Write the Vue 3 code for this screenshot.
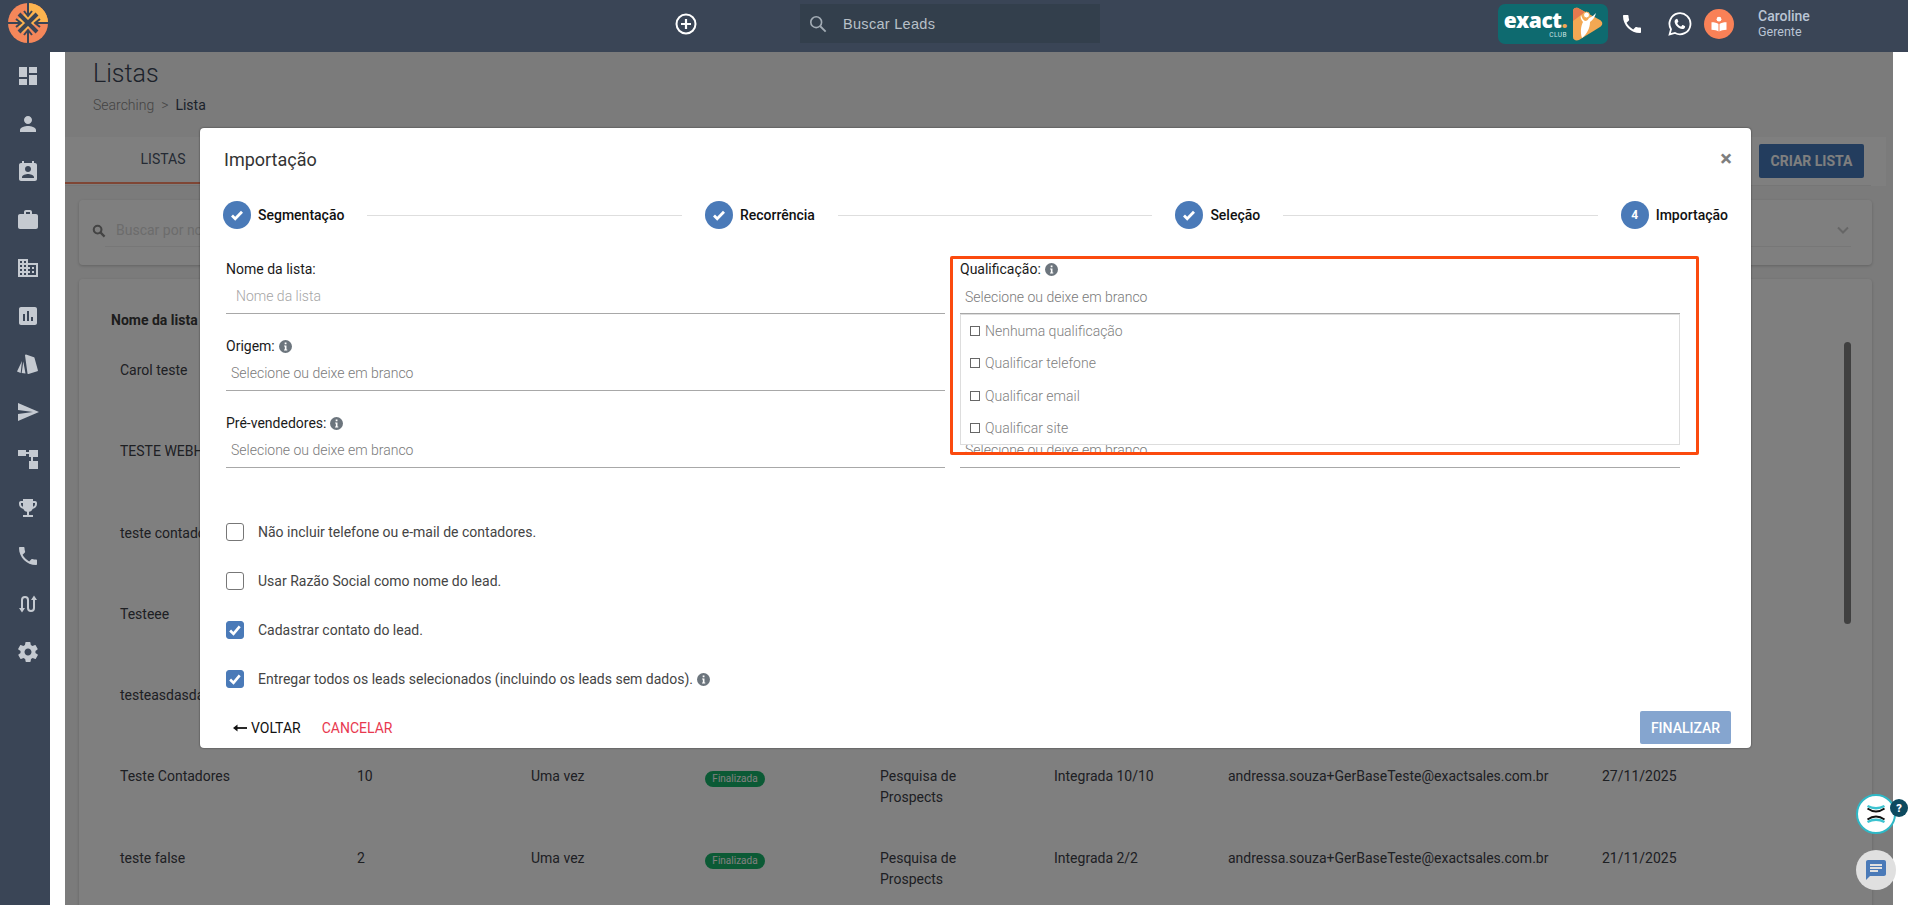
<script setup>
const navIcons = [
  { d: 'M3 13h8V3H3v10zm0 8h8v-6H3v6zm10 0h8V11h-8v10zm0-18v6h8V3h-8z' },
  { d: 'M12 12c2.2 0 4-1.8 4-4s-1.8-4-4-4-4 1.8-4 4 1.8 4 4 4zm0 2c-2.7 0-8 1.3-8 4v2h16v-2c0-2.7-5.3-4-8-4z' },
  { d: 'M19 3h-1V1h-2v2H8V1H6v2H5c-1.1 0-2 .9-2 2v14c0 1.1.9 2 2 2h14c1.1 0 2-.9 2-2V5c0-1.1-.9-2-2-2zm-7 3c1.7 0 3 1.3 3 3s-1.3 3-3 3-3-1.3-3-3 1.3-3 3-3zm6 12H6v-1c0-2 4-3.1 6-3.1s6 1.1 6 3.1v1z' },
  { d: 'M20 6h-4V4c0-1.1-.9-2-2-2h-4c-1.1 0-2 .9-2 2v2H4c-1.1 0-2 .9-2 2v11c0 1.1.9 2 2 2h16c1.1 0 2-.9 2-2V8c0-1.1-.9-2-2-2zm-6 0h-4V4h4v2z' },
  { d: 'M12 7V3H2v18h20V7H12zM6 19H4v-2h2v2zm0-4H4v-2h2v2zm0-4H4V9h2v2zm0-4H4V5h2v2zm4 12H8v-2h2v2zm0-4H8v-2h2v2zm0-4H8V9h2v2zm0-4H8V5h2v2zm10 12h-8v-2h2v-2h-2v-2h2v-2h-2V9h8v10zm-2-8h-2v2h2v-2zm0 4h-2v2h2v-2z' },
  { d: 'M19 3H5c-1.1 0-2 .9-2 2v14c0 1.1.9 2 2 2h14c1.1 0 2-.9 2-2V5c0-1.1-.9-2-2-2zM9 17H7v-7h2v7zm4 0h-2V7h2v10zm4 0h-2v-4h2v4z' },
  { d: 'M9 3.200c.1-.5.6-.8 1-.7l8 2.800c.5.200.7.600.6 1l3.300 11.900c.1.500-.1.900-.6 1l-8.800 2.800c-.5.100-.9-.1-1-.6zM6 9 1 19.500l3.700 1.500zM7.300 9.500 5.700 21l3.800.5z' },
  { d: 'M2 21l21-9L2 3v7l15 2-15 2v7z' },
  { d: 'M2 2h8v2h3V2h9v7h-5v4h5v8h-9v-8h2V9h-2V6h-3v2H2z' },
  { d: 'M19 5h-2V3H7v2H5c-1.100 0-2 .9-2 2v1c0 2.500 1.900 4.600 4.400 4.900.6 1.500 2 2.600 3.600 2.900V19H7v2h10v-2h-4v-3.200c1.600-.3 3-1.400 3.600-2.900 2.500-.3 4.400-2.400 4.400-4.900V7c0-1.100-.9-2-2-2zM5 8V7h2v3.800C5.800 10.400 5 9.300 5 8zm14 0c0 1.300-.8 2.400-2 2.800V7h2v1z' },
  { d: 'M6.600 10.800c1.400 2.800 3.800 5.100 6.600 6.600l2.200-2.200c.3-.3.700-.4 1-.2 1.100.4 2.300.6 3.600.6.600 0 1 .4 1 1V20c0 .6-.4 1-1 1C10.600 21 3 13.400 3 4c0-.6.400-1 1-1h3.500c.6 0 1 .4 1 1 0 1.300.2 2.500.6 3.600.1.300 0 .7-.2 1l-2.300 2.200z' },
  { d: 'M6 16.500V8a3 3 0 0 1 6 0v8a3 3 0 0 0 6 0V7.500', stroke: true, extra: 'M3 16h6l-3 4.500zM15 8h6l-3-4.500z' },
  { d: 'M19.400 13c0-.3.1-.6.1-1s0-.7-.1-1l2.100-1.600c.2-.2.2-.4.1-.6l-2-3.500c-.1-.2-.4-.3-.6-.2l-2.500 1c-.5-.4-1.100-.7-1.700-1l-.4-2.600c0-.2-.2-.4-.5-.4h-4c-.2 0-.5.2-.5.400l-.4 2.600c-.6.300-1.200.6-1.700 1l-2.500-1c-.2-.1-.5 0-.6.200l-2 3.500c-.1.200-.1.400.1.600L4.600 11c0 .3-.1.600-.1 1s0 .7.1 1l-2.100 1.600c-.2.200-.2.400-.1.600l2 3.500c.1.200.4.300.6.200l2.500-1c.5.400 1.100.700 1.700 1l.4 2.600c0 .2.300.4.500.4h4c.3 0 .5-.2.5-.4l.4-2.600c.6-.3 1.200-.6 1.700-1l2.500 1c.2.100.5 0 .6-.2l2-3.500c.1-.2.1-.4-.1-.6L19.400 13zM12 15.500c-1.900 0-3.500-1.600-3.500-3.500s1.600-3.500 3.500-3.500 3.500 1.600 3.500 3.500-1.600 3.500-3.500 3.500z' }
]

const email = 'andressa.souza+GerBaseTeste@exactsales.com.br'
const rows = [
  { name: 'Carol teste', qty: '5', status: 'Integrada 5/5', date: '03/12/2025' },
  { name: 'TESTE WEBHOOK', qty: '3', status: 'Integrada 3/3', date: '02/12/2025' },
  { name: 'teste contadores', qty: '8', status: 'Integrada 8/8', date: '01/12/2025' },
  { name: 'Testeee', qty: '4', status: 'Integrada 4/4', date: '28/11/2025' },
  { name: 'testeasdasda', qty: '6', status: 'Integrada 6/6', date: '28/11/2025' },
  { name: 'Teste Contadores', qty: '10', status: 'Integrada 10/10', date: '27/11/2025' },
  { name: 'teste false', qty: '2', status: 'Integrada 2/2', date: '21/11/2025' }
]

const steps = [
  { label: 'Segmentação', done: true },
  { label: 'Recorrência', done: true },
  { label: 'Seleção', done: true },
  { label: 'Importação', done: false, n: '4' }
]

const leftFields = [
  { label: 'Nome da lista:', value: 'Nome da lista', info: false, input: true },
  { label: 'Origem:', value: 'Selecione ou deixe em branco', info: true },
  { label: 'Pré-vendedores:', value: 'Selecione ou deixe em branco', info: true }
]

const options = ['Nenhuma qualificação', 'Qualificar telefone', 'Qualificar email', 'Qualificar site']

const checks = [
  { label: 'Não incluir telefone ou e-mail de contadores.', on: false },
  { label: 'Usar Razão Social como nome do lead.', on: false },
  { label: 'Cadastrar contato do lead.', on: true },
  { label: 'Entregar todos os leads selecionados (incluindo os leads sem dados).', on: true, info: true }
]
</script>

<template>
  <div class="app">
    <header class="top">
      <div class="logo-cell">
        <svg class="logo" viewBox="0 0 40 40">
          <circle cx="20" cy="20" r="20" fill="#f5875a" />
          <path d="M20 0a20 20 0 0 1 20 20H28L14 30 8 18 20 8z" fill="#fdb44f" />
          <path d="M0 20h12M28 20h12M20 0v12M20 28v12" stroke="#3a4556" stroke-width="2" fill="none" />
          <path d="M11 11l18 18M29 11 11 29" stroke="#3a4556" stroke-width="4" fill="none" />
          <path d="M16 8l4 5 4-5M16 32l4-5 4 5M8 16l5 4-5 4M32 16l-5 4 5 4" stroke="#3a4556" stroke-width="2" fill="none" />
        </svg>
      </div>
      <div class="top-center">
        <svg class="plus" viewBox="0 0 24 24"><circle cx="12" cy="12" r="9.500" fill="none" stroke="#fff" stroke-width="2" /><path d="M12 7v10M7 12h10" stroke="#fff" stroke-width="2.200" /></svg>
        <div class="search">
          <svg class="search-ic" viewBox="0 0 20 20"><circle cx="8" cy="8" r="6" fill="none" stroke="#a3acb5" stroke-width="1.800" /><path d="m12.500 12.500 6 6" stroke="#a3acb5" stroke-width="2" /></svg>
          <span>Buscar Leads</span>
        </div>
      </div>
      <div class="top-right">
        <div class="club">
          <div class="club-text"><span class="club-exact">exact<i>.</i></span><span class="club-sub">CLUB</span></div>
          <svg class="club-play" viewBox="0 0 31 34">
            <path d="M1 4c0-3 3-4 5-3l22 12c3 2 3 5 0 7L7 33c-3 1-6 0-6-3z" fill="#f3a853" />
            <path d="M1 4c0-3 3-4 5-3l7 4-12 9z" fill="#e5794e" />
            <path d="M9 8c1 3 2 5 4 6 2 0 3-1 4-3 3-1 5-3 7-5-1 4-3 7-6 9 0 6-3 12-8 16-2-6-1-12 1-16-2-2-3-5-2-7z" fill="#fff" />
            <circle cx="14.500" cy="8" r="3" fill="#fff" stroke="#f3a853" stroke-width="1" />
          </svg>
        </div>
        <svg class="phone" viewBox="0 0 24 24"><path fill="#fff" d="M6.600 10.800c1.400 2.800 3.800 5.100 6.600 6.600l2.200-2.200c.3-.3.700-.4 1-.2 1.100.4 2.300.6 3.600.6.600 0 1 .4 1 1V20c0 .6-.4 1-1 1C10.600 21 3 13.400 3 4c0-.6.400-1 1-1h3.500c.6 0 1 .4 1 1 0 1.300.2 2.500.6 3.600.1.300 0 .7-.2 1l-2.300 2.200z" /></svg>
        <svg class="wa" viewBox="0 0 24 24"><path fill="none" stroke="#fff" stroke-width="1.800" d="M1.600 22.400 3 17.200A10.500 10.500 0 1 1 7 21z" /><path fill="#fff" d="M8.600 6.800c.4 0 .7 0 .9.500l.8 1.900c.1.300 0 .5-.1.700l-.7.900c-.2.200-.2.400-.1.600.7 1.300 1.800 2.400 3.300 3.100.2.100.4.100.6-.1l.9-1.100c.2-.2.400-.3.700-.2l1.800.9c.3.100.5.300.4.700-.1 1.500-1.400 2.400-2.900 2.300-3.600-.4-7.300-3.800-7.600-7.300-.1-1.300.8-2.800 2-2.800z" /></svg>
        <div class="book">
          <svg viewBox="0 0 24 24"><circle cx="12" cy="5.500" r="3.200" fill="#fff" /><path fill="#fff" d="M2 9.500c4 0 7.500.8 9.300 2.500v10C9.500 20.500 6 19.500 2 19.500zM22 9.500c-4 0-7.500.8-9.300 2.500v10c1.800-1.500 5.300-2.500 9.300-2.500z" /></svg>
        </div>
        <div class="user"><b>Caroline</b><span>Gerente</span></div>
      </div>
    </header>

    <div class="body">
      <nav class="side">
        <div v-for="(n, i) in navIcons" :key="i" class="nav-item">
          <svg viewBox="0 0 24 24">
            <path v-if="n.stroke" :d="n.d" fill="none" stroke="#c5cad1" stroke-width="2" />
            <path v-else :d="n.d" fill="#c5cad1" />
            <path v-if="n.extra" :d="n.extra" fill="#c5cad1" />
          </svg>
        </div>
      </nav>

      <div class="gutter"></div>

      <main class="main">
        <div class="page-head">
          <h1>Listas</h1>
          <div class="crumb"><span class="c1">Searching</span><span class="c2">&gt;</span><span class="c3">Lista</span></div>
        </div>

        <div class="tabs">
          <div class="tab-active">LISTAS</div>
          <div class="tab-fill"></div>
          <button class="criar">CRIAR LISTA</button>
        </div>

        <section class="filter-card">
          <svg class="f-ic" viewBox="0 0 20 20"><circle cx="8" cy="8" r="5.500" fill="none" stroke="#888" stroke-width="3" /><path d="m12 12 6 6" stroke="#888" stroke-width="3.200" /></svg>
          <div class="f-input"><span>Buscar por nome</span>
            <svg class="chev" viewBox="0 0 14 9"><path d="m2 1.500 5 5 5-5" fill="none" stroke="#ccc" stroke-width="2" /></svg>
          </div>
        </section>

        <section class="table-card">
          <div class="thead">Nome da lista</div>
          <div v-for="r in rows" :key="r.name" class="tr">
            <div>{{ r.name }}</div>
            <div>{{ r.qty }}</div>
            <div>Uma vez</div>
            <div class="td-pill"><span class="pill">Finalizada</span></div>
            <div class="td-src">Pesquisa de Prospects</div>
            <div>{{ r.status }}</div>
            <div>{{ email }}</div>
            <div>{{ r.date }}</div>
          </div>
          <div class="scrollbar"></div>
        </section>

        <div class="veil"></div>

        <div class="modal">
          <div class="m-head">
            <h2>Importação</h2>
            <span class="close">×</span>
          </div>

          <div class="stepper">
            <template v-for="(s, i) in steps" :key="s.label">
              <div class="step">
                <span class="circle">
                  <svg v-if="s.done" viewBox="0 0 14 14"><path d="m2 7.500 3.200 3.200 6.800-7" fill="none" stroke="#fff" stroke-width="2.800" /></svg>
                  <template v-else>{{ s.n }}</template>
                </span>
                <span class="s-label">{{ s.label }}</span>
              </div>
              <div v-if="i < steps.length - 1" class="s-line"></div>
            </template>
          </div>

          <div class="form">
            <div class="col">
              <div v-for="f in leftFields" :key="f.label" class="field">
                <label><span>{{ f.label }}</span>
                  <svg v-if="f.info" class="info" viewBox="0 0 16 16"><circle cx="8" cy="8" r="8" fill="#6c757d" /><path d="M7 3h2.200v2.200H7zM6.300 6.700h2.900v5H10.200v1.300H6.200v-1.300h1v-3.700h-.9z" fill="#fff" /></svg>
                </label>
                <div class="control" :class="{ 'is-input': f.input }">{{ f.value }}</div>
              </div>
            </div>
            <div class="col right">
              <div class="field">
                <label><span>Qualificação:</span>
                  <svg class="info" viewBox="0 0 16 16"><circle cx="8" cy="8" r="8" fill="#6c757d" /><path d="M7 3h2.200v2.200H7zM6.300 6.700h2.900v5H10.200v1.300H6.200v-1.300h1v-3.700h-.9z" fill="#fff" /></svg>
                </label>
                <div class="control first">Selecione ou deixe em branco</div>
                <ul class="drop">
                  <li v-for="o in options" :key="o"><i class="mini"></i>{{ o }}</li>
                </ul>
              </div>
              <div class="field spacer"></div>
              <div class="field">
                <label class="ghost"></label>
                <div class="control">Selecione ou deixe em branco</div>
              </div>
              <div class="annot"></div>
            </div>
          </div>

          <div class="checks">
            <div v-for="c in checks" :key="c.label" class="check">
              <span class="box" :class="{ on: c.on }">
                <svg v-if="c.on" viewBox="0 0 18 18"><path d="m3.500 9.500 3.800 3.800 7-8.300" fill="none" stroke="#fff" stroke-width="3" /></svg>
              </span>
              <span>{{ c.label }}</span>
              <svg v-if="c.info" class="info" viewBox="0 0 16 16"><circle cx="8" cy="8" r="8" fill="#6c757d" /><path d="M7 3h2.200v2.200H7zM6.300 6.700h2.900v5H10.200v1.300H6.200v-1.300h1v-3.700h-.9z" fill="#fff" /></svg>
            </div>
          </div>

          <div class="m-foot">
            <span class="back"><svg viewBox="0 0 14 8"><path d="M14 4H2" fill="none" stroke="#111" stroke-width="1.800" /><path d="M4.500.5 0 4l4.500 3.500z" fill="#111" /></svg>VOLTAR</span>
            <span class="cancel">CANCELAR</span>
            <button class="finish">FINALIZAR</button>
          </div>
        </div>
      </main>

      <div class="gutter-r"></div>
    </div>

    <div class="bot">
      <svg viewBox="0 0 24 24">
        <path d="M3.500 4q8.500 4.500 17 0" fill="none" stroke="#3cc3d0" stroke-width="2.400" />
        <path d="M3.500 6.500q8.500 6 17 0" fill="none" stroke="#111" stroke-width="2" />
        <path d="M3.500 17.500q8.500-6 17 0" fill="none" stroke="#111" stroke-width="2" />
        <path d="M3.500 20q8.500-4.500 17 0" fill="none" stroke="#3cc3d0" stroke-width="2.400" />
      </svg>
      <span class="bot-badge">?</span>
    </div>
    <div class="chat">
      <svg viewBox="0 0 24 24"><path fill="#4a7ab8" d="M20 2H4c-1.100 0-2 .9-2 2v18l4-4h14c1.100 0 2-.9 2-2V4c0-1.100-.9-2-2-2zM6 9h12v2H6zm8 5H6v-2h8zm4-6H6V6h12z" /></svg>
    </div>
  </div>
</template>

<style>
html, body { margin: 0; height: 100%; overflow: hidden; background: #fff; }
</style>

<style scoped>
.app { width: 1908px; height: 905px; overflow: hidden; position: relative; display: flex; flex-direction: column; font-family: Roboto, "Liberation Sans", sans-serif; font-size: 14px; color: #222; }
.top { height: 52px; flex: none; background: #3a4556; display: flex; align-items: center; }
.logo-cell { width: 56px; flex: none; display: flex; justify-content: center; margin-top: -6px; }
.logo { width: 40px; height: 40px; }
.top-center { margin-left: 618px; display: flex; align-items: center; }
.plus { width: 24px; height: 24px; margin-top: -4px; }
.search { margin-left: 102px; width: 300px; height: 39px; margin-top: -5px; background: #333f4c; display: flex; align-items: center; color: #b8c0c8; font-family: "Liberation Sans", Arial, sans-serif; font-size: 14.500px; letter-spacing: .3px; box-sizing: border-box; padding-left: 9px; }
.search-ic { width: 18px; height: 18px; margin-right: 16px; }
.top-right { margin-left: 398px; display: flex; align-items: center; }
.club { width: 110px; height: 40px; margin-top: -5px; background: #0e6a6f; border-radius: 7px; display: flex; align-items: center; box-sizing: border-box; padding-left: 7px; flex: none; }
.club-text { display: flex; flex-direction: column; align-items: flex-end; width: 62px; line-height: 1; flex: none; }
.club-exact { font-family: "Open Sans", sans-serif; font-weight: 800; font-size: 21px; line-height: 22px; color: #fff; letter-spacing: -.5px; }
.club-exact i { font-style: normal; color: #f3a853; }
.club-sub { font-size: 6.500px; color: #cfe3e3; margin-top: 1px; letter-spacing: .5px; }
.club-play { width: 31px; height: 34px; margin-left: 5px; flex: none; }
.phone { width: 24px; height: 24px; margin-left: 12px; margin-top: -5px; }
.wa { width: 24px; height: 24px; margin-left: 24px; margin-top: -5px; }
.book { width: 30px; height: 30px; border-radius: 50%; background: #f98157; margin-left: 12px; margin-top: -5px; display: flex; align-items: center; justify-content: center; }
.book svg { width: 18px; height: 18px; }
.user { margin-left: 24px; display: flex; flex-direction: column; color: #b9c4d4; font-size: 12.500px; margin-top: -5px; line-height: 15px; }
.user b { font-size: 14px; font-weight: 500; line-height: 16px; }

.body { flex: 1; min-height: 0; display: flex; }
.side { width: 50px; flex: none; background: #3a4556; }
.nav-item { width: 56px; height: 48px; display: flex; align-items: center; justify-content: center; }
.nav-item svg { width: 24px; height: 24px; }
.gutter, .gutter-r { width: 15px; flex: none; background: #fff; }
.main { flex: 1; min-width: 0; position: relative; background: #f6f6f6; overflow: hidden; }

.page-head { height: 85px; box-sizing: border-box; padding: 7px 0 0 28px; }
.page-head h1 { margin: 0; font-size: 25px; font-weight: 300; line-height: 30px; color: #3a4556; }
.crumb { margin-top: 6px; font-size: 14px; font-weight: 300; display: flex; gap: 7px; line-height: 20px; }
.c1, .c2 { color: #888; }
.c3 { color: #3a4556; font-weight: 400; }
.tabs { margin-right: 7px; height: 49px; background: #fff; display: flex; align-items: flex-start; position: relative; }
.tabs::after { content: ""; position: absolute; left: 0; right: 15px; bottom: 0; height: 1px; background: #ededed; }
.tab-active { height: 47px; width: 196px; display: flex; align-items: center; justify-content: center; box-sizing: border-box; border-bottom: 2px solid #ff8c6b; padding-bottom: 2px; color: #4a5568; font-size: 14px; }
.tab-fill { flex: 1; }
.criar { width: 105px; height: 34px; margin: 7px 22px 0 0; background: #467bbc; color: #fff; border: 0; border-radius: 2px; font: 700 14px Roboto, sans-serif; }

.filter-card { margin: 14px 21px 0 14px; height: 65px; background: #fff; border-radius: 4px; box-shadow: 0 1px 3px rgba(0,0,0,.2); display: flex; align-items: center; box-sizing: border-box; padding: 0 21px 4px 13px; }
.f-ic { width: 14px; height: 14px; flex: none; }
.f-input { flex: 1; margin-left: -1px; padding-left: 11px; height: 32px; border-bottom: 1px solid #eee; display: flex; align-items: center; justify-content: space-between; color: #d8d8d8; font-size: 14px; }
.chev { width: 14px; height: 9px; margin-right: 1px; }

.table-card { margin: 14px 21px 0 14px; height: 700px; background: #fff; border-radius: 4px; box-shadow: 0 1px 3px rgba(0,0,0,.2); position: relative; padding: 32px 0 0 32px; box-sizing: border-box; }
.thead { font-weight: 700; font-size: 14px; line-height: 18px; margin-bottom: 31px; color: #3a3a3a; }
.tr { display: grid; grid-template-columns: 237px 174px 174px 175px 174px 174px 374px 120px; margin-left: 9px; height: 81.300px; box-sizing: border-box; line-height: 21px; color: #3c4047; }
.td-src { width: 110px; }
.td-pill { display: flex; align-items: flex-start; padding-top: 5px; }
.pill { display: block; width: 60px; height: 16px; text-align: center; border-radius: 8px; background: #17b46a; color: #fff; font-size: 10px; line-height: 16px; }
.scrollbar { position: absolute; left: 1765px; top: 63px; width: 7px; height: 282px; background: #808080; border-radius: 4px; }

.veil { position: absolute; inset: 0; background: rgba(0,0,0,.5); }
.modal { position: absolute; left: 135px; top: 76px; width: 1551px; height: 620px; background: #fff; border-radius: 4px; box-shadow: 0 0 2px rgba(0,0,0,.6); display: flex; flex-direction: column; box-sizing: border-box; padding: 0 23px; }
.m-head { height: 60px; flex: none; display: flex; align-items: center; justify-content: space-between; padding-top: 2px; box-sizing: border-box; }
.m-head h2 { margin: 0 0 0 1px; font-size: 18px; font-weight: 400; color: #333; }
.close { font-size: 22px; font-weight: 700; color: #7e7e7e; line-height: 1; margin-right: -4px; }
.stepper { display: flex; align-items: center; height: 28px; margin-top: 13px; flex: none; }
.step { display: flex; align-items: center; gap: 7px; flex: none; }
.circle { width: 28px; height: 28px; border-radius: 50%; background: #4a7ab8; color: #fff; font-weight: 700; font-size: 12px; display: flex; align-items: center; justify-content: center; }
.circle svg { width: 14px; height: 14px; }
.s-label { font-weight: 500; font-size: 14px; color: #111; }
.s-line { flex: 1; height: 1px; background: #dedede; margin: 0 23px; }

.form { display: grid; grid-template-columns: 719px 720px; column-gap: 15px; margin: 31px 0 0 3px; height: 226px; flex: none; }
.col { position: relative; }
.field { position: relative; height: 77px; }
.field label { display: flex; align-items: center; gap: 4px; height: 18px; font-size: 14px; color: #1a1a1a; }
.info { width: 13px; height: 13px; flex: none; }
.control { height: 36px; box-sizing: border-box; border-bottom: 1px solid #a8a8a8; padding-left: 5px; color: #7a7a7a; font-weight: 300; font-size: 14px; line-height: 37px; }
.control.first { line-height: 38px; }
.is-input { padding-left: 10px; color: #a5a5a5; }
.drop { position: absolute; z-index: 2; left: 0; top: 54px; width: 720px; height: 131px; margin: 0; padding: 0; list-style: none; background: #fff; border: 1px solid #ddd; box-sizing: border-box; color: #808080; font-weight: 300; }
.drop li { height: 32.300px; display: flex; align-items: center; padding-left: 9px; }
.mini { width: 8px; height: 8px; border: 1px solid #666; margin-right: 5px; flex: none; }
.annot { position: absolute; z-index: 3; left: -10px; top: -4px; width: 749px; height: 199px; box-sizing: border-box; border: 3px solid #fb4a0e; border-radius: 2px; pointer-events: none; }

.checks { margin: 37px 0 0 3px; display: flex; flex-direction: column; gap: 31px; flex: none; }
.check { display: flex; align-items: center; height: 18px; color: #444; font-size: 14px; }
.box { width: 18px; height: 18px; box-sizing: border-box; border: 1px solid #777; border-radius: 3px; margin-right: 14px; flex: none; }
.box.on { background: #4a7ab8; border-color: #4a7ab8; }
.box svg { display: block; width: 16px; height: 16px; }
.check .info { margin-left: 4px; }
.m-foot { display: flex; align-items: center; margin-top: auto; height: 33px; margin-bottom: 4px; flex: none; padding-left: 10px; margin-right: -3px; }
.back { display: flex; align-items: center; gap: 4px; color: #111; font-size: 14px; }
.back svg { width: 14px; height: 8px; }
.cancel { margin-left: 21px; color: #e8384f; font-size: 14px; }
.finish { margin-left: auto; width: 91px; height: 33px; background: #85a5cf; color: #fff; border: 0; border-radius: 2px; font: 500 14px Roboto, sans-serif; }

.bot { position: absolute; left: 1856px; top: 794px; width: 40px; height: 40px; box-sizing: border-box; border-radius: 50%; border: 2px solid #2fb8c6; background: #fff; display: flex; align-items: center; justify-content: center; }
.bot svg { width: 24px; height: 24px; }
.bot-badge { position: absolute; left: 32px; top: 3px; width: 18px; height: 18px; border-radius: 50%; background: #0d4a5f; color: #fff; font-size: 11px; font-weight: 900; display: flex; align-items: center; justify-content: center; }
.chat { position: absolute; left: 1856px; top: 850px; width: 40px; height: 40px; border-radius: 50%; background: #e0e0e0; display: flex; align-items: center; justify-content: center; }
.chat svg { width: 24px; height: 24px; }
</style>
